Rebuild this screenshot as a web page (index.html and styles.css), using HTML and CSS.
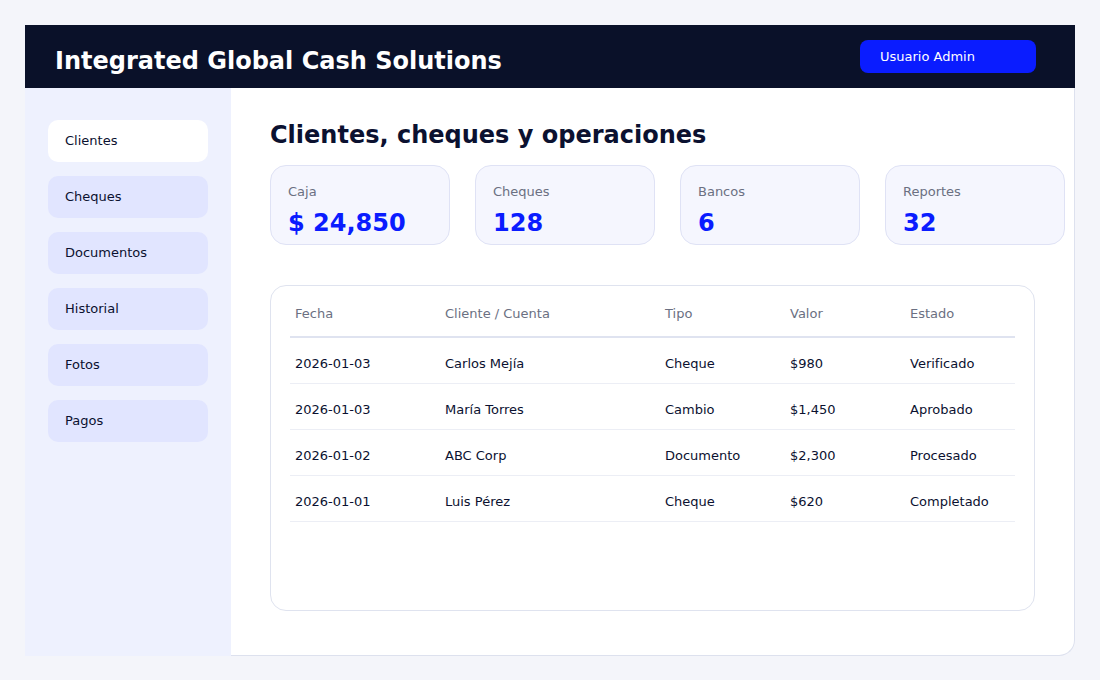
FILE: index.html
```html
<!DOCTYPE html>
<html lang="es">

<head>
    <meta charset="UTF-8">
    <meta name="viewport" content="width=device-width, initial-scale=1.0">
    <title>Integrated Global Cash Solutions</title>
    <link rel="stylesheet" href="styles.css">
</head>

<body>
    <div class="app">
        <header class="topbar">
            <h1 class="brand">Integrated Global Cash Solutions</h1>
            <button class="user-btn">Usuario Admin</button>
        </header>

        <aside class="sidebar">
            <a class="nav-item active" href="#">Clientes</a>
            <a class="nav-item" href="#">Cheques</a>
            <a class="nav-item" href="#">Documentos</a>
            <a class="nav-item" href="#">Historial</a>
            <a class="nav-item" href="#">Fotos</a>
            <a class="nav-item" href="#">Pagos</a>
        </aside>

        <main class="content">
            <h2 class="page-title">Clientes, cheques y operaciones</h2>

            <div class="stats">
                <div class="stat">
                    <span class="stat-label">Caja</span>
                    <span class="stat-value">$ 24,850</span>
                </div>
                <div class="stat">
                    <span class="stat-label">Cheques</span>
                    <span class="stat-value">128</span>
                </div>
                <div class="stat">
                    <span class="stat-label">Bancos</span>
                    <span class="stat-value">6</span>
                </div>
                <div class="stat">
                    <span class="stat-label">Reportes</span>
                    <span class="stat-value">32</span>
                </div>
            </div>

            <div class="table-card">
                <table class="ops">
                    <thead>
                        <tr>
                            <th class="col-date">Fecha</th>
                            <th class="col-client">Cliente / Cuenta</th>
                            <th class="col-type">Tipo</th>
                            <th class="col-value">Valor</th>
                            <th>Estado</th>
                        </tr>
                    </thead>
                    <tbody>
                        <tr>
                            <td>2026-01-03</td>
                            <td>Carlos Mejía</td>
                            <td>Cheque</td>
                            <td>$980</td>
                            <td>Verificado</td>
                        </tr>
                        <tr>
                            <td>2026-01-03</td>
                            <td>María Torres</td>
                            <td>Cambio</td>
                            <td>$1,450</td>
                            <td>Aprobado</td>
                        </tr>
                        <tr>
                            <td>2026-01-02</td>
                            <td>ABC Corp</td>
                            <td>Documento</td>
                            <td>$2,300</td>
                            <td>Procesado</td>
                        </tr>
                        <tr>
                            <td>2026-01-01</td>
                            <td>Luis Pérez</td>
                            <td>Cheque</td>
                            <td>$620</td>
                            <td>Completado</td>
                        </tr>
                    </tbody>
                </table>
            </div>
        </main>
    </div>
</body>

</html>
```

FILE: styles.css
```css
body {
    margin: 0;
    padding: 25px;
    background: #f4f5fa;
    font-family: "DejaVu Sans", sans-serif;
    color: #0b1130;
}

.app {
    width: 1050px;
    height: 631px;
    display: grid;
    grid-template-columns: 206px minmax(0, 1fr);
    grid-template-rows: 63px 1fr;
}

.topbar {
    grid-column: 1 / 3;
    background: #0a1129;
    display: flex;
    align-items: center;
    justify-content: space-between;
    padding: 0 39px 0 30px;
}

.brand {
    margin: 8px 0 0;
    color: #fff;
    font-size: 24px;
    font-weight: bold;
}

.user-btn {
    width: 176px;
    height: 33px;
    border: none;
    border-radius: 8px;
    background: #0a1cff;
    color: #fff;
    font-family: inherit;
    font-size: 13px;
    text-align: left;
    padding: 0 20px;
}

.sidebar {
    background: #eef1fe;
    padding: 32px 23px;
    display: flex;
    flex-direction: column;
    gap: 14px;
}

.nav-item {
    display: block;
    height: 42px;
    line-height: 42px;
    padding: 0 17px;
    border-radius: 10px;
    background: #e1e5ff;
    color: #0b1130;
    font-size: 13px;
    text-decoration: none;
}

.nav-item.active {
    background: #fff;
}

.content {
    background: #fff;
    border-right: 1px solid #dde1ee;
    border-bottom: 1px solid #dde1ee;
    border-bottom-right-radius: 16px;
    padding: 32px 39px 0 39px;
}

.page-title {
    margin: 0 0 15px;
    font-size: 24px;
    font-weight: bold;
    line-height: 30px;
}

.stats {
    display: grid;
    grid-template-columns: repeat(4, 180px);
    gap: 25px;
}

.stat {
    box-sizing: border-box;
    height: 80px;
    padding: 17px 17px 0;
    background: #f5f6fe;
    border: 1px solid #dfe2f5;
    border-radius: 16px;
    display: flex;
    flex-direction: column;
}

.stat-label {
    font-size: 13px;
    color: #6b7082;
    line-height: 18px;
}

.stat-value {
    margin-top: 7px;
    font-size: 24px;
    font-weight: bold;
    color: #0a1cff;
    line-height: 30px;
}

.table-card {
    box-sizing: border-box;
    height: 326px;
    margin-top: 40px;
    padding: 20px 19px 19px;
    border: 1px solid #dfe3ef;
    border-radius: 16px;
}

.ops {
    width: 100%;
    border-collapse: collapse;
    font-size: 13px;
}

.ops th {
    text-align: left;
    font-weight: normal;
    color: #6b7082;
    padding: 0 5px 14px;
    line-height: 16px;
    border-bottom: 2px solid #dfe3f0;
}

.ops td {
    padding: 18px 5px 11px;
    line-height: 16px;
    border-bottom: 1px solid #eceef5;
}

.col-date {
    width: 140px;
}

.col-client {
    width: 210px;
}

.col-type {
    width: 115px;
}

.col-value {
    width: 110px;
}
```
